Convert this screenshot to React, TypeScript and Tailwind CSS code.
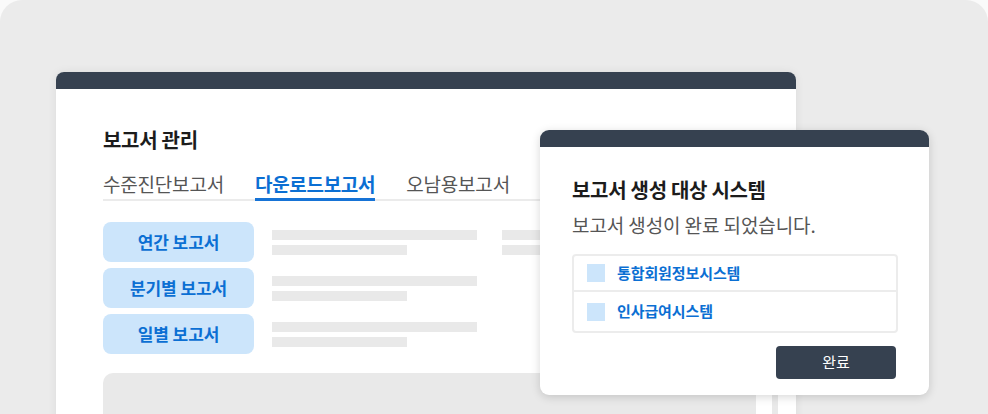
import React from "react";

const font = { fontFamily: '"Noto Sans CJK KR", "Noto Sans", sans-serif' };

function Bars() {
  return (
    <div className="flex flex-col gap-[5px] pt-[8px]">
      <div className="h-[10px] w-[205px] bg-[#e9e9e9]" />
      <div className="h-[10px] w-[135px] bg-[#e9e9e9]" />
    </div>
  );
}

function ReportRow({ label, extra }: { label: string; extra?: boolean }) {
  return (
    <div className="flex gap-[18px]">
      <div className="flex h-[40px] w-[151px] items-center justify-center rounded-[8px] bg-[#cce5fb] text-[17px] font-semibold tracking-[-0.1px] text-[#0b6fd3]">
        {label}
      </div>
      <Bars />
      {extra && (
        <div className="ml-[7px]">
          <Bars />
        </div>
      )}
    </div>
  );
}

export default function App() {
  const tabs = ["수준진단보고서", "다운로드보고서", "오남용보고서"];
  return (
    <div className="h-[414px] w-[988px] overflow-hidden bg-[#fafafa]" style={font}>
      <div className="relative h-[440px] rounded-t-[22px] bg-[#ebebeb] pl-[56px] pt-[72px]">
        {/* main window */}
        <div className="w-[740px] overflow-hidden rounded-t-[8px] bg-white shadow-[0_0_10px_rgba(0,0,0,0.07)]">
          <div className="h-[17px] bg-[#364150]" />
          <div className="h-[360px] pl-[47px] pt-[37px]">
            <div className="text-[20px] font-bold leading-[27px] tracking-[-0.3px] text-[#1c1c1c]">
              보고서 관리
            </div>
            <div className="mt-[19px] flex w-[500px] gap-[31px] border-b-2 border-[#ebebeb]">
              {tabs.map((t, i) => (
                <div
                  key={t}
                  className={
                    i === 1
                      ? "relative pb-[3px] text-[19px] font-semibold leading-[24px] tracking-[-0.3px] text-[#0b6fd3]"
                      : "relative pb-[3px] text-[19px] leading-[24px] tracking-[-0.2px] text-[#555555]"
                  }
                >
                  {t}
                  {i === 1 && (
                    <div className="absolute bottom-[-2px] left-0 right-0 h-[3px] bg-[#1673d6]" />
                  )}
                </div>
              ))}
            </div>
            <div className="mt-[21px] flex flex-col gap-[6px]">
              <ReportRow label="연간 보고서" extra />
              <ReportRow label="분기별 보고서" />
              <ReportRow label="일별 보고서" />
            </div>
            <div className="mt-[19px] flex gap-[16px]">
              <div className="h-[80px] w-[653px] rounded-tl-[10px] rounded-tr-[10px] bg-[#e9e9e9]" />
              <div className="h-[80px] w-[6px] bg-[#e9e9e9]" />
            </div>
          </div>
        </div>

        {/* dialog */}
        <div className="absolute left-[540px] top-[130px] w-[389px] overflow-hidden rounded-[9px] bg-white shadow-[0_2px_10px_rgba(0,0,0,0.16)]">
          <div className="h-[17px] bg-[#364150]" />
          <div className="pb-[16px] pl-[32px] pr-[31px] pt-[29px]">
            <div className="text-[20px] font-bold leading-[27px] tracking-[-0.3px] text-[#1c1c1c]">
              보고서 생성 대상 시스템
            </div>
            <div className="mt-[9px] text-[19px] leading-[25px] tracking-[-0.1px] text-[#555555]">
              보고서 생성이 완료 되었습니다.
            </div>
            <div className="mt-[17px] rounded-[4px] border-2 border-[#ececec]">
              <div className="flex h-[36px] items-center gap-[12px] border-b-2 border-[#ececec] pl-[13px]">
                <div className="h-[18px] w-[18px] bg-[#cce5fb]" />
                <span className="text-[15px] font-semibold tracking-[-0.1px] text-[#0b6fd3]">
                  통합회원정보시스템
                </span>
              </div>
              <div className="flex h-[39px] items-center gap-[12px] pl-[13px]">
                <div className="h-[18px] w-[18px] bg-[#cce5fb]" />
                <span className="text-[15px] font-semibold tracking-[-0.1px] text-[#0b6fd3]">
                  인사급여시스템
                </span>
              </div>
            </div>
            <div className="mt-[13px] flex justify-end pr-[2px]">
              <div className="flex h-[33px] w-[120px] items-center justify-center rounded-[4px] bg-[#364150] text-[15px] text-white">
                완료
              </div>
            </div>
          </div>
        </div>
      </div>
    </div>
  );
}
